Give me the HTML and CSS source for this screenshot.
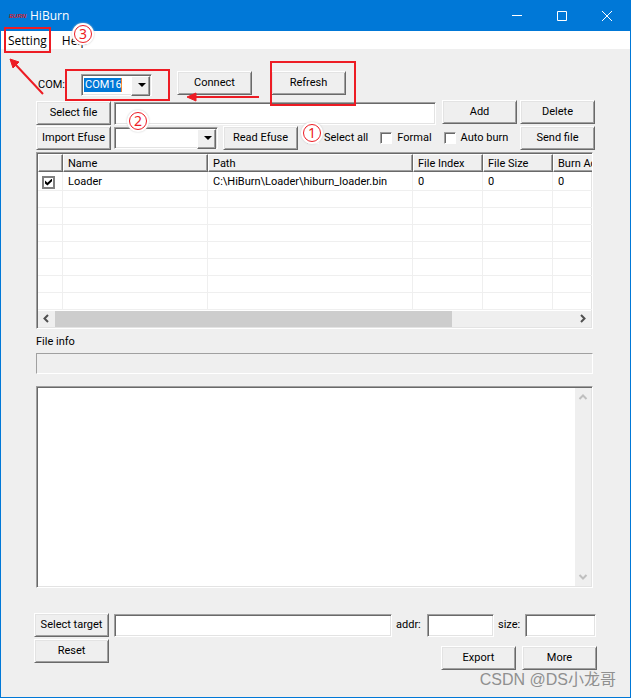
FILE: index.html
```html
<!DOCTYPE html>
<html lang="en">
<head>
<meta charset="utf-8">
<title>HiBurn</title>
<link rel="stylesheet" href="styles.css">
</head>
<body>
<div class="window">
  <header class="titlebar">
    <span class="logo">BURN</span>
    <h1 class="title">HiBurn</h1>
    <button class="win-btn" aria-label="Minimize"><svg width="10" height="10" viewBox="0 0 10 10"><path d="M0 4.500H10"/></svg></button>
    <button class="win-btn" aria-label="Maximize"><svg width="10" height="10" viewBox="0 0 10 10"><path d="M.5 .5H9.500V9.500H.5Z"/></svg></button>
    <button class="win-btn" aria-label="Close"><svg width="10" height="10" viewBox="0 0 10 10"><path d="M0 0L10 10M10 0L0 10"/></svg></button>
  </header>
  <nav class="menubar">
    <a href="#setting">Setting</a>
    <a href="#help">Help</a>
  </nav>

  <main class="content">
    <div class="row row-com">
      <label class="com-label" for="com">COM:</label>
      <span class="combo combo-com"><select id="com" class="sunken picked"><option>COM16</option></select></span>
      <button class="btn connect">Connect</button>
      <button class="btn refresh">Refresh</button>
    </div>

    <div class="row row-file">
      <button class="btn">Select file</button>
      <input class="field sunken grow" type="text" aria-label="Selected file">
      <span class="pair"><button class="btn">Add</button><button class="btn">Delete</button></span>
    </div>

    <div class="row row-efuse">
      <button class="btn">Import Efuse</button>
      <span class="combo combo-efuse"><select class="sunken" aria-label="Efuse"><option></option></select></span>
      <button class="btn read">Read Efuse</button>
      <span class="checks">
        <label><input type="checkbox" class="check">Select all</label>
        <label><input type="checkbox" class="check">Formal</label>
        <label><input type="checkbox" class="check">Auto burn</label>
      </span>
      <button class="btn">Send file</button>
    </div>

    <section class="list sunken">
      <table>
        <colgroup><col class="c-check"><col class="c-name"><col class="c-path"><col class="c-num"><col class="c-num"><col class="c-num"></colgroup>
        <thead>
          <tr><th></th><th>Name</th><th>Path</th><th>File Index</th><th>File Size</th><th>Burn Addr</th></tr>
        </thead>
        <tbody>
          <tr class="first"><td><input type="checkbox" class="check flat" aria-label="Loader" checked></td><td>Loader</td><td>C:\HiBurn\Loader\hiburn_loader.bin</td><td>0</td><td>0</td><td>0</td></tr>
          <tr><td></td><td></td><td></td><td></td><td></td><td></td></tr>
          <tr><td></td><td></td><td></td><td></td><td></td><td></td></tr>
          <tr><td></td><td></td><td></td><td></td><td></td><td></td></tr>
          <tr><td></td><td></td><td></td><td></td><td></td><td></td></tr>
          <tr><td></td><td></td><td></td><td></td><td></td><td></td></tr>
          <tr><td></td><td></td><td></td><td></td><td></td><td></td></tr>
          <tr><td></td><td></td><td></td><td></td><td></td><td></td></tr>
        </tbody>
      </table>
      <div class="hscroll">
        <svg width="17" height="16" viewBox="0 0 17 16"><path d="M10 4L6.500 7.500L10 11"/></svg>
        <div class="track"><div class="thumb"></div></div>
        <svg width="17" height="16" viewBox="0 0 17 16"><path d="M7 4L10.500 7.500L7 11"/></svg>
      </div>
    </section>

    <label class="info-label" for="info">File info</label>
    <input id="info" class="info" type="text" readonly>

    <div class="log sunken">
      <textarea aria-label="Log"></textarea>
      <div class="vscroll">
        <svg width="16" height="17" viewBox="0 0 16 17"><path d="M4.500 11L8 7.500L11.500 11"/></svg>
        <svg width="16" height="17" viewBox="0 0 16 17"><path d="M4.500 6L8 9.500L11.500 6"/></svg>
      </div>
    </div>

    <div class="bottom">
      <div class="row row-target">
        <button class="btn">Select target</button>
        <input class="field sunken grow" type="text" aria-label="Target">
        <label for="addr">addr:</label>
        <input id="addr" class="field sunken addr" type="text">
        <label class="size-label" for="size">size:</label>
        <input id="size" class="field sunken size" type="text">
      </div>
      <div class="row row-actions">
        <button class="btn">Reset</button>
        <span class="actions"><button class="btn">Export</button><button class="btn">More</button></span>
      </div>
    </div>
  </main>

  <div class="mark box-setting"></div>
  <div class="mark box-com"></div>
  <div class="mark box-refresh"></div>
  <svg class="arrows" width="270" height="110" viewBox="0 0 270 110">
    <path class="shaft" d="M43 94L15 64M259 97H196"/>
    <path class="head" d="M10 59L19 62L13 68ZM187 97L196 93V101Z"/>
  </svg>
  <span class="badge badge-1">1</span>
  <span class="badge badge-2">2</span>
  <span class="badge badge-3">3</span>
  <div class="watermark">CSDN @DS小龙哥</div>
</div>
</body>
</html>
```

FILE: styles.css
```css
* { box-sizing: border-box; }

body {
  margin: 0;
  background: #efefef;
  color: #000;
  font: 11px/14px Roboto, "Noto Sans", sans-serif;
}

button, input, select, textarea {
  margin: 0;
  font: inherit;
  color: inherit;
  border-radius: 0;
  outline: 0;
}

.window {
  position: relative;
  display: flex;
  flex-direction: column;
  min-height: 100vh;
  border: 1px solid #0078d7;
  overflow: hidden;
}

/* Title bar and menu */
.titlebar {
  display: flex;
  align-items: center;
  height: 30px;
  padding: 0 1px 0 8px;
  background: #0078d7;
  color: #fff;
}
.logo {
  width: 21px;
  color: #d0202c;
  font: italic bold 6px/8px "Liberation Sans", sans-serif;
}
.title {
  flex: 1;
  margin: 0;
  font: 12px/16px "Open Sans", sans-serif;
}
.win-btn {
  display: grid;
  place-items: center;
  width: 45px;
  height: 30px;
  padding: 0;
  border: 0;
  background: none;
}
.win-btn svg { fill: none; stroke: #fff; }

.menubar {
  display: flex;
  gap: 15px;
  height: 18px;
  padding-left: 7px;
  background: #fff;
  font: 12px/19px "Open Sans", sans-serif;
}
.menubar a { color: #000; text-decoration: none; }

/* Bevels */
.sunken {
  border: 1px solid;
  border-color: #a0a0a0 #fff #fff #a0a0a0;
  box-shadow: inset 1px 1px #696969, inset -1px -1px #e3e3e3;
  background: #fff;
}
.btn {
  flex: none;
  width: 75px;
  height: 24px;
  padding: 0 0 1px;
  border: 1px solid;
  border-color: #fff #696969 #696969 #fff;
  box-shadow: inset 1px 1px #e3e3e3, inset -1px -1px #a0a0a0;
  background: #efefef;
  white-space: nowrap;
}

/* Form rows */
.content {
  flex: 1;
  display: flex;
  flex-direction: column;
  padding: 22px 37px 27px 35px;
}
.row { display: flex; align-items: center; }
.field { height: 23px; min-width: 0; padding: 0 4px; }
.grow { flex: 1; }

.row-com { height: 24px; margin-bottom: 6px; }
.com-label { width: 45px; padding: 3px 0 0 2px; }
.connect { margin-left: 25px; }
.refresh { margin-left: 19px; }

.combo { position: relative; display: block; }
.combo select {
  appearance: none;
  display: block;
  width: 100%;
  height: 22px;
  padding: 2px 18px 2px 3px;
}
.combo::before {
  content: "";
  position: absolute;
  top: 2px;
  right: 2px;
  width: 17px;
  height: 18px;
  border: 1px solid;
  border-color: #fff #696969 #696969 #fff;
  box-shadow: inset -1px -1px #a0a0a0;
  background: #efefef;
  pointer-events: none;
}
.combo::after {
  content: "";
  position: absolute;
  top: 9px;
  right: 6px;
  border: 4px solid transparent;
  border-top-color: #000;
  border-bottom: 0;
  pointer-events: none;
}
.combo-com { width: 71px; margin-top: 4px; }
.combo-com .picked {
  color: #fff;
  background: linear-gradient(90deg, #0078d7 37px, #f08030 37px) 2px 3px / 38px 14px no-repeat #fff;
}
.combo-efuse { width: 104px; margin-left: 3px; }

.row-file { gap: 3px; height: 24px; margin: 0 -2px 1px 0; }
.pair { display: flex; gap: 3px; margin: 0 0 2px 3px; }

.row-efuse { height: 24px; margin: 0 -2px 2px 0; }
.read { margin-left: 5px; }
.checks {
  flex: 1;
  display: flex;
  gap: 12px;
  padding-left: 9px;
}
.checks label { display: flex; align-items: center; gap: 5px; white-space: nowrap; }
.check {
  appearance: none;
  display: grid;
  place-items: center;
  width: 12px;
  height: 12px;
  border: 1px solid;
  border-color: #a0a0a0 #fff #fff #a0a0a0;
  box-shadow: inset 1px 1px #696969;
  background: #fff;
}
.check.flat { width: 13px; height: 13px; border: 2px solid #808080; box-shadow: none; }
.check:checked::before {
  content: "";
  width: 7px;
  height: 7px;
  background: #000;
  clip-path: polygon(0 30%, 35% 60%, 100% 0, 100% 40%, 35% 100%, 0 70%);
}

/* File list */
.list { padding: 1px; overflow: hidden; }
.list table {
  width: 585px;
  table-layout: fixed;
  border-collapse: separate;
  border-spacing: 0;
}
.c-check { width: 25px; }
.c-name { width: 145px; }
.c-path { width: 205px; }
.c-num { width: 70px; }
.list th {
  height: 18px;
  padding: 1px 4px 0;
  border: 1px solid;
  border-color: #fff #696969 #696969 #fff;
  box-shadow: inset -1px -1px #a0a0a0;
  background: #efefef;
  font-weight: normal;
  line-height: 15px;
  text-align: left;
  white-space: nowrap;
}
.list td {
  height: 17px;
  padding: 0 5px;
  border-right: 1px solid #efefef;
  border-bottom: 1px solid #efefef;
  line-height: 16px;
  white-space: nowrap;
}
.list .first td { height: 19px; padding-top: 2px; }
.list .first td:first-child { padding-left: 4px; }
.hscroll { display: flex; height: 17px; background: #efefef; border-top: 1px solid #fff; }
.hscroll svg { fill: none; stroke: #505050; stroke-width: 2; }
.track { flex: 1; }
.thumb { width: 76.400%; height: 16px; background: #cdcdcd; }

/* File info and log */
.info-label { margin: 6px 0 4px; }
.info {
  height: 21px;
  margin-bottom: 12px;
  border: 1px solid;
  border-color: #a0a0a0 #fff #fff #a0a0a0;
  background: #efefef;
}
.log { flex: 1; display: flex; min-height: 120px; padding: 1px; }
.log textarea { flex: 1; border: 0; padding: 2px; resize: none; background: #fff; }
.vscroll {
  display: flex;
  flex-direction: column;
  justify-content: space-between;
  width: 16px;
  background: #efefef;
}
.vscroll svg { fill: none; stroke: #bfbfbf; stroke-width: 2; }

/* Target and actions */
.bottom { margin: 25px -4px 0 -2px; }
.row-target { gap: 4px; padding-right: 1px; }
.row-target .grow { margin-left: 1px; }
.row-target label { width: 27px; }
.row-target .size-label { width: 23px; }
.addr { width: 67px; }
.size { width: 71px; }
.row-actions { align-items: flex-start; justify-content: space-between; padding-top: 2px; }
.actions { display: flex; gap: 6px; padding-top: 7px; }

/* Annotations drawn over the window */
.mark { position: absolute; border: 2px solid #ed1c24; }
.box-setting { left: 3px; top: 26px; width: 47px; height: 26px; }
.box-com { left: 64px; top: 68px; width: 105px; height: 32px; }
.box-refresh { left: 269px; top: 60px; width: 86px; height: 45px; }
.arrows { position: absolute; left: -1px; top: -1px; pointer-events: none; }
.shaft { fill: none; stroke: #ed1c24; stroke-width: 2; }
.head { fill: #ed1c24; stroke: #ed1c24; }
.badge {
  position: absolute;
  width: 18px;
  height: 18px;
  border: 1px solid #ed1c24;
  border-radius: 50%;
  background: #fff;
  box-shadow: 0 0 0 2px #fff, 0 0 2px 2px #c8c8c8;
  color: #ed1c24;
  font: 14px/16px "Noto Sans", sans-serif;
  text-align: center;
}
.badge-1 { left: 302px; top: 123px; }
.badge-2 { left: 128px; top: 111px; }
.badge-3 { left: 73px; top: 24px; }
.watermark {
  position: absolute;
  right: 14px;
  bottom: 6px;
  color: #909090;
  font: 16px/22px "Liberation Sans", "Noto Sans CJK SC", sans-serif;
  white-space: nowrap;
}
```
